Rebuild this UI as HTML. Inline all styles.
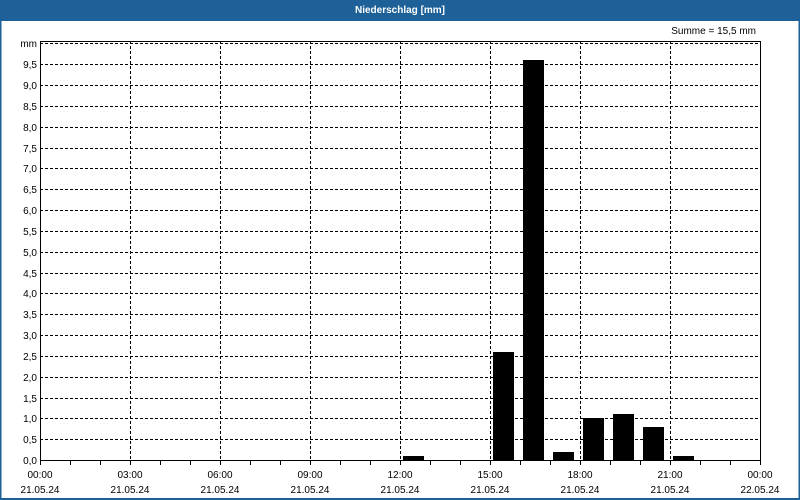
<!DOCTYPE html>
<html><head><meta charset="utf-8"><style>
html,body{margin:0;padding:0;background:#fff;}
svg{display:block;font-family:"Liberation Sans",sans-serif;}
</style></head><body>
<svg width="800" height="500" xmlns="http://www.w3.org/2000/svg">
<rect x="0" y="0" width="800" height="500" fill="#fff"/>
<rect x="0" y="0" width="800" height="21" fill="#1d6198"/>
<rect x="0" y="0" width="1.5" height="500" fill="#1d6198"/>
<rect x="798.5" y="0" width="1.5" height="500" fill="#1d6198"/>
<rect x="0" y="498" width="800" height="2" fill="#1d6198"/>
<text x="400" y="13" fill="#fff" font-size="10" font-weight="bold" text-anchor="middle">Niederschlag [mm]</text>
<text x="756" y="34" fill="#000" font-size="10" text-anchor="end">Summe = 15,5 mm</text>
<g stroke="#000" stroke-width="1" stroke-dasharray="3,2" fill="none">
<path d="M40 43.5H760M40 64.5H760M40 85.5H760M40 106.5H760M40 127.5H760M40 148.5H760M40 168.5H760M40 189.5H760M40 210.5H760M40 231.5H760M40 252.5H760M40 273.5H760M40 293.5H760M40 314.5H760M40 335.5H760M40 356.5H760M40 377.5H760M40 398.5H760M40 418.5H760M40 439.5H760"/>
<path d="M130.5 41V460M220.5 41V460M310.5 41V460M400.5 41V460M490.5 41V460M580.5 41V460M670.5 41V460"/>
</g>
<rect x="40.5" y="41.5" width="720" height="419" fill="none" stroke="#000" stroke-width="1"/>
<g stroke="#000" stroke-width="1">
<path d="M40.5 460V465M70.5 460V465M100.5 460V465M130.5 460V465M160.5 460V465M190.5 460V465M220.5 460V465M250.5 460V465M280.5 460V465M310.5 460V465M340.5 460V465M370.5 460V465M400.5 460V465M430.5 460V465M460.5 460V465M490.5 460V465M520.5 460V465M550.5 460V465M580.5 460V465M610.5 460V465M640.5 460V465M670.5 460V465M700.5 460V465M730.5 460V465M760.5 460V465"/>
</g>
<g fill="#000">
<rect x="403" y="456" width="21" height="4"/>
<rect x="493" y="352" width="21" height="108"/>
<rect x="523" y="60" width="21" height="400"/>
<rect x="553" y="452" width="21" height="8"/>
<rect x="583" y="418" width="21" height="42"/>
<rect x="613" y="414" width="21" height="46"/>
<rect x="643" y="427" width="21" height="33"/>
<rect x="673" y="456" width="21" height="4"/>
</g>
<g font-size="10" fill="#000" text-anchor="end">
<text x="37" y="47">mm</text>
<text x="37" y="68">9,5</text><text x="37" y="89">9,0</text><text x="37" y="110">8,5</text><text x="37" y="131">8,0</text>
<text x="37" y="152">7,5</text><text x="37" y="172">7,0</text><text x="37" y="193">6,5</text><text x="37" y="214">6,0</text>
<text x="37" y="235">5,5</text><text x="37" y="256">5,0</text><text x="37" y="277">4,5</text><text x="37" y="297">4,0</text>
<text x="37" y="318">3,5</text><text x="37" y="339">3,0</text><text x="37" y="360">2,5</text><text x="37" y="381">2,0</text>
<text x="37" y="402">1,5</text><text x="37" y="422">1,0</text><text x="37" y="443">0,5</text><text x="37" y="464">0,0</text>
</g>
<g font-size="10" fill="#000" text-anchor="middle">
<text x="40" y="478">00:00</text><text x="40" y="493">21.05.24</text>
<text x="130" y="478">03:00</text><text x="130" y="493">21.05.24</text>
<text x="220" y="478">06:00</text><text x="220" y="493">21.05.24</text>
<text x="310" y="478">09:00</text><text x="310" y="493">21.05.24</text>
<text x="400" y="478">12:00</text><text x="400" y="493">21.05.24</text>
<text x="490" y="478">15:00</text><text x="490" y="493">21.05.24</text>
<text x="580" y="478">18:00</text><text x="580" y="493">21.05.24</text>
<text x="670" y="478">21:00</text><text x="670" y="493">21.05.24</text>
<text x="760" y="478">00:00</text><text x="760" y="493">22.05.24</text>
</g>
</svg>
</body></html>
